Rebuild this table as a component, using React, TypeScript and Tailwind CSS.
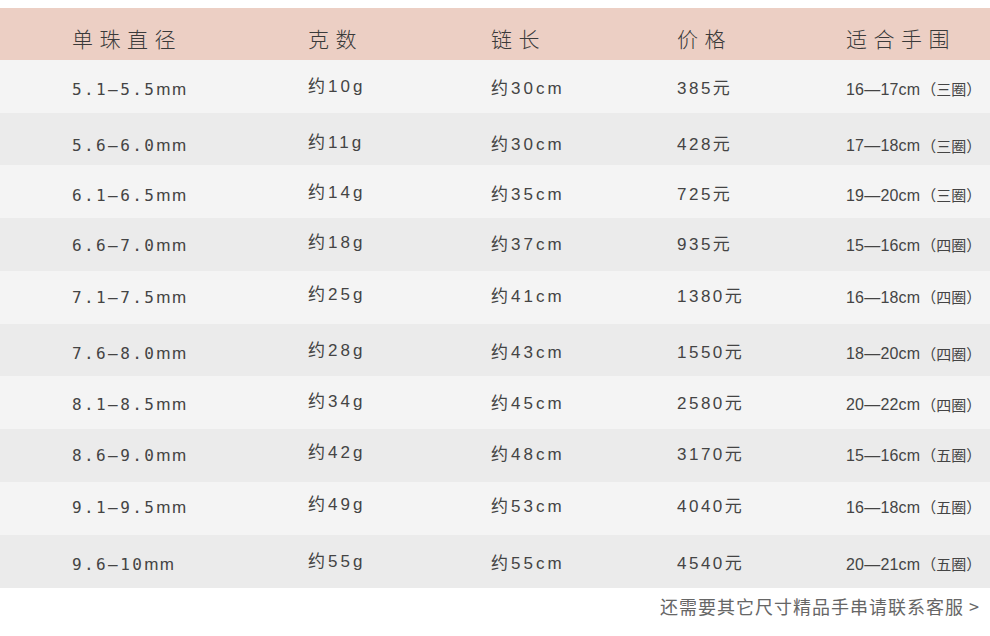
import React from "react";

const rows = [
  ["5.1—5.5", "约10g", "约30cm", "385元", "16—17cm", "三圈"],
  ["5.6—6.0", "约11g", "约30cm", "428元", "17—18cm", "三圈"],
  ["6.1—6.5", "约14g", "约35cm", "725元", "19—20cm", "三圈"],
  ["6.6—7.0", "约18g", "约37cm", "935元", "15—16cm", "四圈"],
  ["7.1—7.5", "约25g", "约41cm", "1380元", "16—18cm", "四圈"],
  ["7.6—8.0", "约28g", "约43cm", "1550元", "18—20cm", "四圈"],
  ["8.1—8.5", "约34g", "约45cm", "2580元", "20—22cm", "四圈"],
  ["8.6—9.0", "约42g", "约48cm", "3170元", "15—16cm", "五圈"],
  ["9.1—9.5", "约49g", "约53cm", "4040元", "16—18cm", "五圈"],
  ["9.6—10", "约55g", "约55cm", "4540元", "20—21cm", "五圈"],
];

const heights = ["h-[53px]", "h-[52px]", "h-[53px]", "h-[53px]", "h-[53px]", "h-[52px]", "h-[53px]", "h-[53px]", "h-[53px]", "h-[53px]"];
const offsets = ["pt-[4px]", "pt-[12px]", "pt-[6px]", "", "pb-[2px]", "pt-[6px]", "pt-[3px]", "pb-[2px]", "pb-[4px]", "pt-[4px]"];

const grid = "grid grid-cols-[236px_183px_186px_169px_1fr] pl-[72px]";

export default function App() {
  return (
    <div
      className="w-[990px] h-[636px] bg-white text-[#333333] overflow-hidden"
      style={{ fontFamily: '"Liberation Sans", "Noto Sans CJK SC", sans-serif' }}
    >
      <div className="h-[8px]" />
      <div className={`${grid} h-[52px] bg-[#eccfc4] items-center pt-[10px] text-[21px] font-light tracking-[6.5px] text-[#3a3a3a] [font-family:'Noto_Sans_CJK_SC',sans-serif]`}>
        <div>单珠直径</div>
        <div>克数</div>
        <div>链长</div>
        <div>价格</div>
        <div>适合手围</div>
      </div>
      {rows.map((r, i) => (
        <div
          key={i}
          className={`${heights[i]} ${i % 2 === 0 ? "bg-[#f4f4f4]" : "bg-[#ebebeb]"} flex flex-col justify-center ${offsets[i]}`}
        >
          <div className={`${grid} items-center text-[17px] text-[#444444]`}>
            <div className="pt-[2px] whitespace-nowrap">
              <span className="text-[16px] tracking-[2.4px] [font-family:'DejaVu_Sans_Mono',monospace]">{r[0]}</span>
              <span className="tracking-[1.5px]">mm</span>
            </div>
            <div className="tracking-[3px] pb-[4px]">{r[1]}</div>
            <div className="tracking-[3px]">{r[2]}</div>
            <div className="tracking-[2.5px]">{r[3]}</div>
            <div className="flex items-center whitespace-nowrap pt-[2px]">
              <span className="text-[16px] tracking-[0.2px]">{r[4]}</span>
              <span className="text-[15px] ml-[1px] [font-family:'Noto_Sans_CJK_SC',sans-serif]">（{r[5]}）</span>
            </div>
          </div>
        </div>
      ))}
      <div className="flex justify-end pr-[10px] pt-[5px] text-[18px] tracking-[1px] text-[#666666] [font-family:'Noto_Sans_CJK_SC',sans-serif]">
        还需要其它尺寸精品手串请联系客服 &gt;
      </div>
    </div>
  );
}
